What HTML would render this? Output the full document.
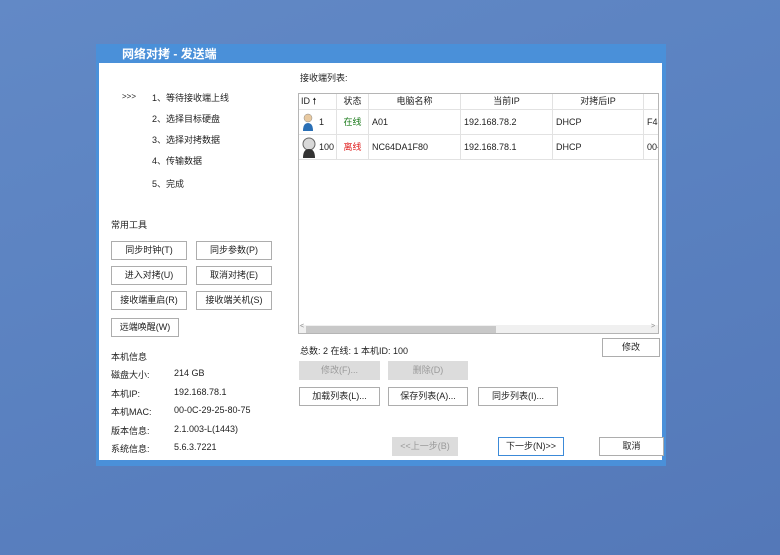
<!DOCTYPE html>
<html><head><meta charset="utf-8"><style>
*{margin:0;padding:0;box-sizing:border-box}
body{width:780px;height:555px;overflow:hidden;background:linear-gradient(160deg,#6289c6 0%,#5a81c0 50%,#5478b8 100%);font-family:"Liberation Sans","Noto Sans CJK SC",sans-serif;font-size:9px;color:#222;position:relative}
.a{position:absolute;white-space:nowrap}
.dlg{position:absolute;left:96px;top:44px;width:570px;height:422px;background:#4a90d9}
.in{position:absolute;left:99px;top:63px;width:563px;height:397px;background:#fff}
.b{position:absolute;height:19px;border:1px solid #adadad;background:#fff;text-align:center;line-height:17px;font-size:9px}
.d{background:#dcdcdc;border-color:#dcdcdc;color:#9a9a9a}
.tb{position:absolute;left:298px;top:93px;width:361px;height:241px;border:1px solid #b5b5b5;background:#fff;overflow:hidden}
.c{position:absolute;border-right:1px solid #e2e2e2;border-bottom:1px solid #e2e2e2;line-height:24px;padding-left:3px}
.h{line-height:15px;text-align:center;padding:0}
</style></head><body>
<div class="dlg"></div>
<div class="in"></div>
<div class="a" style="left:122px;top:46px;color:#fff;font-weight:bold;font-size:12px;line-height:16px">网络对拷 - 发送端</div>
<div class="a" style="left:300px;top:71px">接收端列表:</div>
<div class="a" style="left:122px;top:92px;font-size:8px">&gt;&gt;&gt;</div>
<div class="a" style="left:152px;top:91px">1、等待接收端上线</div>
<div class="a" style="left:152px;top:112px">2、选择目标硬盘</div>
<div class="a" style="left:152px;top:133px">3、选择对拷数据</div>
<div class="a" style="left:152px;top:154px">4、传输数据</div>
<div class="a" style="left:152px;top:177px">5、完成</div>
<div class="a" style="left:111px;top:218px">常用工具</div>
<div class="b" style="left:111px;top:241px;width:76px">同步时钟(T)</div>
<div class="b" style="left:196px;top:241px;width:76px">同步参数(P)</div>
<div class="b" style="left:111px;top:266px;width:76px">进入对拷(U)</div>
<div class="b" style="left:196px;top:266px;width:76px">取消对拷(E)</div>
<div class="b" style="left:111px;top:291px;width:76px">接收端重启(R)</div>
<div class="b" style="left:196px;top:291px;width:76px">接收端关机(S)</div>
<div class="b" style="left:111px;top:318px;width:68px">远端唤醒(W)</div>
<div class="a" style="left:111px;top:350px">本机信息</div>
<div class="a" style="left:111px;top:368px">磁盘大小:</div><div class="a" style="left:174px;top:368px">214 GB</div>
<div class="a" style="left:111px;top:387px">本机IP:</div><div class="a" style="left:174px;top:387px">192.168.78.1</div>
<div class="a" style="left:111px;top:405px">本机MAC:</div><div class="a" style="left:174px;top:405px">00-0C-29-25-80-75</div>
<div class="a" style="left:111px;top:424px">版本信息:</div><div class="a" style="left:174px;top:424px">2.1.003-L(1443)</div>
<div class="a" style="left:111px;top:442px">系统信息:</div><div class="a" style="left:174px;top:442px">5.6.3.7221</div>
<div class="tb">
<div class="c h" style="left:0;top:0;width:38px;height:16px;text-align:left;padding-left:2px">ID 🠕</div>
<div class="c h" style="left:38px;top:0;width:32px;height:16px">状态</div>
<div class="c h" style="left:70px;top:0;width:92px;height:16px">电脑名称</div>
<div class="c h" style="left:162px;top:0;width:92px;height:16px">当前IP</div>
<div class="c h" style="left:254px;top:0;width:91px;height:16px">对拷后IP</div>
<div class="c h" style="left:345px;top:0;width:20px;height:16px"></div>
<div class="c" style="left:0;top:16px;width:38px;height:25px;padding-left:20px">1</div>
<svg class="a" style="left:3px;top:19px" width="12" height="18"><circle cx="6" cy="5" r="4" fill="#e8c9a0" stroke="#888" stroke-width=".5"/><path d="M1 18 Q1 10 6 10 Q11 10 11 18Z" fill="#2a6fb5"/></svg>
<div class="c" style="left:38px;top:16px;width:32px;height:25px;color:#1a7a1a;text-align:center;padding:0">在线</div>
<div class="c" style="left:70px;top:16px;width:92px;height:25px">A01</div>
<div class="c" style="left:162px;top:16px;width:92px;height:25px">192.168.78.2</div>
<div class="c" style="left:254px;top:16px;width:91px;height:25px">DHCP</div>
<div class="c" style="left:345px;top:16px;width:20px;height:25px">F4-</div>
<div class="c" style="left:0;top:41px;width:38px;height:25px;padding-left:20px">100</div>
<svg class="a" style="left:2px;top:43px" width="16" height="21"><circle cx="8" cy="7" r="6" fill="#d8d8d8" stroke="#666"/><path d="M2 21 Q2 12 8 12 Q14 12 14 21Z" fill="#333"/></svg>
<div class="c" style="left:38px;top:41px;width:32px;height:25px;color:#e02020;text-align:center;padding:0">离线</div>
<div class="c" style="left:70px;top:41px;width:92px;height:25px">NC64DA1F80</div>
<div class="c" style="left:162px;top:41px;width:92px;height:25px">192.168.78.1</div>
<div class="c" style="left:254px;top:41px;width:91px;height:25px">DHCP</div>
<div class="c" style="left:345px;top:41px;width:20px;height:25px">00-</div>
<div class="a" style="left:0;top:231px;width:359px;height:9px;background:#f0f0f0"></div>
<div class="a" style="left:7px;top:232px;width:190px;height:7px;background:#c8c8c8"></div>
<div class="a" style="left:1px;top:229px;font-size:7px;color:#888">&lt;</div>
<div class="a" style="left:352px;top:229px;font-size:7px;color:#888">&gt;</div>
</div>
<div class="a" style="left:300px;top:344px">总数: 2 在线: 1 本机ID: 100</div>
<div class="b" style="left:602px;top:338px;width:58px">修改</div>
<div class="b d" style="left:299px;top:361px;width:81px">修改(F)...</div>
<div class="b d" style="left:388px;top:361px;width:80px">删除(D)</div>
<div class="b" style="left:299px;top:387px;width:81px">加载列表(L)...</div>
<div class="b" style="left:388px;top:387px;width:80px">保存列表(A)...</div>
<div class="b" style="left:478px;top:387px;width:80px">同步列表(I)...</div>
<div class="b d" style="left:392px;top:437px;width:66px">&lt;&lt;上一步(B)</div>
<div class="b" style="left:498px;top:437px;width:66px;border-color:#3c8ad8">下一步(N)&gt;&gt;</div>
<div class="b" style="left:599px;top:437px;width:65px">取消</div>
</body></html>
